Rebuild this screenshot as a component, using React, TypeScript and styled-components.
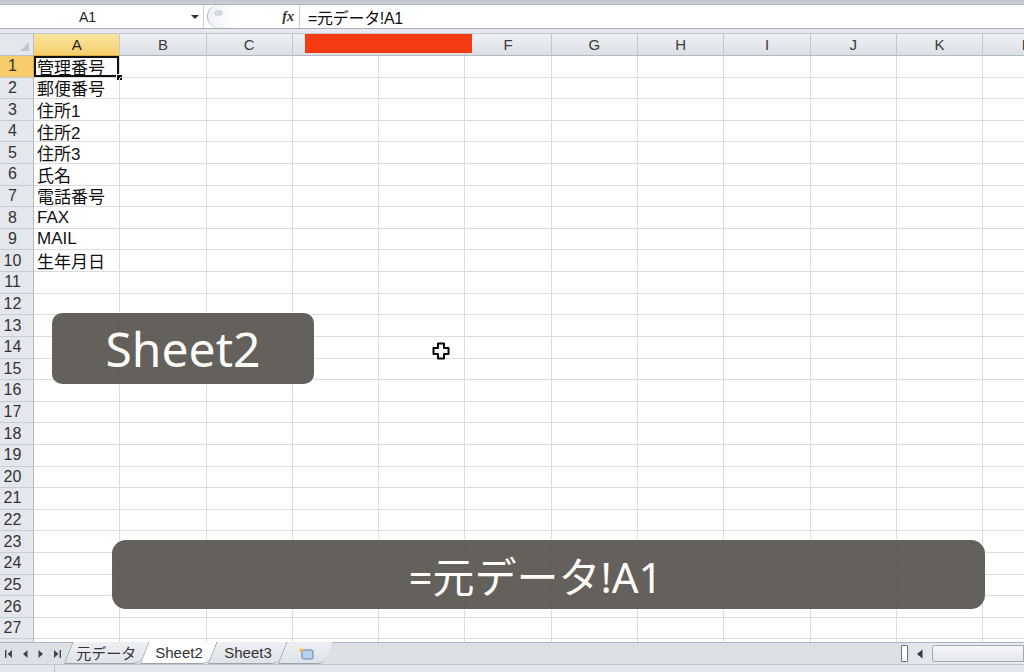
import React from 'react';
import styled, { createGlobalStyle } from 'styled-components';

const COLS = ['A', 'B', 'C', 'D', 'E', 'F', 'G', 'H', 'I', 'J', 'K', 'L'];
const ROWS = 28;
const DATA: Record<number, string> = {
  1: '管理番号',
  2: '郵便番号',
  3: '住所1',
  4: '住所2',
  5: '住所3',
  6: '氏名',
  7: '電話番号',
  8: 'FAX',
  9: 'MAIL',
  10: '生年月日',
};

const GlobalStyle = createGlobalStyle`
  html, body {
    margin: 0;
    padding: 0;
    background: #ffffff;
    overflow: hidden;
  }
  body {
    font-family: "Liberation Sans", "Noto Sans CJK JP", sans-serif;
  }
`;

function App() {
  return (
    <Page>
      <GlobalStyle />
      <TopStrip />
      <FormulaBar>
        <NameBox>
          <NameText>A1</NameText>
          <DropArrow />
        </NameBox>
        <FxBox>
          <Knob />
          <Fx>fx</Fx>
        </FxBox>
        <FormulaInput>=元データ!A1</FormulaInput>
      </FormulaBar>
      <Gap />
      <Sheet>
        <Corner>
          <CornerMark />
        </Corner>
        {COLS.map((c) => (
          <ColHeader key={c} selected={c === 'A'}>
            {c}
          </ColHeader>
        ))}
        {Array.from({ length: ROWS }, (_, i) => i + 1).map((r) => (
          <React.Fragment key={r}>
            <RowHeader selected={r === 1}>{r}</RowHeader>
            {COLS.map((c) => (
              <Cell key={c} active={r === 1 && c === 'A'}>
                {c === 'A' ? DATA[r] : ''}
              </Cell>
            ))}
          </React.Fragment>
        ))}
      </Sheet>
      <TabBar>
        <NavButtons>
          <NavIcon>
            <svg width="10" height="10" viewBox="0 0 10 10">
              <rect x="1" y="1" width="1.4" height="8" fill="#3d4450" />
              <path d="M8 1 L3.5 5 L8 9 Z" fill="#3d4450" />
            </svg>
          </NavIcon>
          <NavIcon>
            <svg width="10" height="10" viewBox="0 0 10 10">
              <path d="M7.5 1 L3 5 L7.5 9 Z" fill="#3d4450" />
            </svg>
          </NavIcon>
          <NavIcon>
            <svg width="10" height="10" viewBox="0 0 10 10">
              <path d="M2.5 1 L7 5 L2.5 9 Z" fill="#3d4450" />
            </svg>
          </NavIcon>
          <NavIcon>
            <svg width="10" height="10" viewBox="0 0 10 10">
              <path d="M2 1 L6.5 5 L2 9 Z" fill="#3d4450" />
              <rect x="7.6" y="1" width="1.4" height="8" fill="#3d4450" />
            </svg>
          </NavIcon>
        </NavButtons>
        <Tab width={76}>
          <TabLabel>元データ</TabLabel>
        </Tab>
        <Tab width={68} active>
          <TabLabel>Sheet2</TabLabel>
        </Tab>
        <Tab width={70}>
          <TabLabel>Sheet3</TabLabel>
        </Tab>
        <Tab width={46}>
          <TabLabel>
            <svg width="18" height="14" viewBox="0 0 18 14">
              <rect x="5" y="4" width="11" height="9" rx="1.5" fill="#b9d3ee" stroke="#5b7fa8" />
              <path d="M4 1 L5 3.5 L7.5 4 L5 4.8 L4 7.5 L3 4.8 L0.5 4 L3 3.5 Z" fill="#f3c21a" />
            </svg>
          </TabLabel>
        </Tab>
        <TabFill />
        <Splitter />
        <ScrollArrow>
          <svg width="8" height="10" viewBox="0 0 8 10">
            <path d="M6.5 0.5 L1 5 L6.5 9.5 Z" fill="#333b45" />
          </svg>
        </ScrollArrow>
        <ScrollTrack>
          <ScrollThumb />
        </ScrollTrack>
      </TabBar>
      <StatusStrip>
        <StatusCell />
      </StatusStrip>

      <Caption
        style={{ left: 52, top: 313, width: 262, height: 71 }}
        size={48}
        radius={10}
      >
        Sheet2
      </Caption>
      <Caption
        style={{ left: 112, top: 540, width: 873, height: 69, paddingRight: 26 }}
        size={42}
        radius={14}
      >
        =元データ!A1
      </Caption>
      <Pointer>
        <svg width="18" height="18" viewBox="0 0 18 18">
          <path
            d="M6 1.5 H12 V6 H16.5 V12 H12 V16.5 H6 V12 H1.5 V6 H6 Z"
            fill="#fff"
            stroke="#000"
            strokeWidth="2"
            strokeLinejoin="round"
          />
        </svg>
      </Pointer>
      <RedMark />
    </Page>
  );
}

export default App;

const Page = styled.div`
  position: relative;
  width: 1024px;
  height: 672px;
  display: flex;
  flex-direction: column;
  overflow: hidden;
  background: #fff;
`;

const TopStrip = styled.div`
  height: 4px;
  background: linear-gradient(#bfc4ca, #cfd3d8);
  border-bottom: 1px solid #a9aeb5;
`;

const FormulaBar = styled.div`
  height: 23px;
  display: flex;
  align-items: stretch;
  background: #fff;
  border-bottom: 1px solid #a9aeb5;
`;

const NameBox = styled.div`
  width: 203px;
  display: flex;
  align-items: center;
  border-right: 1px solid #c9cdd2;
`;

const NameText = styled.span`
  width: 175px;
  text-align: center;
  font-size: 14px;
  color: #222;
`;

const DropArrow = styled.span`
  margin-left: 16px;
  width: 0;
  height: 0;
  border-left: 4px solid transparent;
  border-right: 4px solid transparent;
  border-top: 4px solid #333;
`;

const FxBox = styled.div`
  width: 93px;
  display: flex;
  align-items: center;
  justify-content: space-between;
  margin-left: 3px;
  padding: 0 5px 0 6px;
  box-sizing: border-box;
  border-left: 1px solid #b5bac1;
  border-radius: 12px 0 0 12px;
  background: linear-gradient(90deg, #eef0f3 0%, #fff 30%);
  border-right: 1px solid #c9cdd2;
`;

const Knob = styled.span`
  width: 9px;
  height: 6px;
  border-radius: 50%;
  margin-top: -8px;
  background: #d4d8dd;
`;

const Fx = styled.span`
  font-family: "Liberation Serif", serif;
  font-style: italic;
  font-weight: bold;
  font-size: 14px;
  color: #333;
`;

const FormulaInput = styled.div`
  flex: 1;
  display: flex;
  align-items: center;
  padding-left: 8px;
  font-family: "Liberation Sans", "Noto Sans CJK JP", sans-serif;
  font-size: 16px;
  color: #111;
  letter-spacing: -0.3px;
`;

const Gap = styled.div`
  height: 4px;
  background: #e6e9ed;
`;

const Sheet = styled.div`
  flex: 1;
  display: grid;
  grid-template-columns: 34px repeat(12, 86.3px);
  grid-template-rows: 23px repeat(${ROWS}, 21.62px);
  overflow: hidden;
  background: #fff;
`;

const Corner = styled.div`
  position: relative;
  background: #e4e7eb;
  border-right: 1px solid #b9bec5;
  border-bottom: 1px solid #b9bec5;
  border-top: 1px solid #c4c8ce;
`;

const CornerMark = styled.span`
  position: absolute;
  right: 4px;
  bottom: 4px;
  width: 0;
  height: 0;
  border-left: 9px solid transparent;
  border-bottom: 9px solid #c3c8ce;
`;

const ColHeader = styled.div<{ selected?: boolean }>`
  display: flex;
  align-items: center;
  justify-content: center;
  font-size: 15px;
  color: ${(p) => (p.selected ? '#222' : '#3c3c3c')};
  background: ${(p) =>
    p.selected
      ? 'linear-gradient(#fbe4a0, #f6cf6c)'
      : 'linear-gradient(#eef0f3, #dce0e5)'};
  border-top: 1px solid #c4c8ce;
  border-right: 1px solid #c2c7cd;
  border-bottom: 1px solid ${(p) => (p.selected ? '#e1ac3f' : '#b4b9c0')};
`;

const RowHeader = styled.div<{ selected?: boolean }>`
  display: flex;
  align-items: center;
  justify-content: center;
  padding-right: 8px;
  font-size: 16px;
  color: #333;
  background: ${(p) => (p.selected ? '#f6cd6a' : '#e4e7ec')};
  border-right: 1px solid ${(p) => (p.selected ? '#e1ac3f' : '#b4b9c0')};
  border-bottom: 1px solid #c9cdd3;
`;

const Cell = styled.div<{ active?: boolean }>`
  position: relative;
  display: flex;
  align-items: center;
  padding-left: 3px;
  font-family: "Liberation Sans", "Noto Sans CJK JP", sans-serif;
  font-size: 17px;
  color: #111;
  white-space: nowrap;
  border-right: 1px solid #dadcde;
  border-bottom: 1px solid #dadcde;
  box-shadow: ${(p) => (p.active ? 'inset 0 0 0 2px #111' : 'none')};

  &::after {
    content: '';
    display: ${(p) => (p.active ? 'block' : 'none')};
    position: absolute;
    right: -4px;
    bottom: -4px;
    width: 5px;
    height: 5px;
    background: #111;
    border: 1px solid #fff;
  }
`;

const TabBar = styled.div`
  height: 21px;
  display: flex;
  align-items: stretch;
  background: #dde1e6;
  border-top: 1px solid #b0b5bc;
`;

const NavButtons = styled.div`
  width: 68px;
  display: flex;
  align-items: center;
  padding-left: 1px;
  box-sizing: border-box;
`;

const NavIcon = styled.span`
  width: 16px;
  display: flex;
  justify-content: center;
`;

const Tab = styled.div<{ width: number; active?: boolean }>`
  width: ${(p) => p.width}px;
  display: flex;
  align-items: center;
  justify-content: center;
  margin-top: -1px;
  background: ${(p) => (p.active ? '#ffffff' : 'linear-gradient(#eef0f3, #dfe3e8)')};
  border-left: 1px solid #9da3ab;
  border-bottom: 1px solid #9da3ab;
  border-radius: 0 0 6px 2px;
  box-sizing: border-box;
  transform: skewX(-22deg);
`;

const TabLabel = styled.span`
  display: flex;
  align-items: center;
  transform: skewX(22deg);
  font-family: "Liberation Sans", "Noto Sans CJK JP", sans-serif;
  font-size: 15px;
  color: #333;
`;

const TabFill = styled.div`
  flex: 1;
  margin-left: 4px;
`;

const Splitter = styled.div`
  width: 5px;
  margin: 2px 2px;
  background: #fff;
  border: 1px solid #6b7079;
  border-radius: 1px;
`;

const ScrollArrow = styled.div`
  width: 20px;
  display: flex;
  align-items: center;
  justify-content: center;
  background: #e3e6ea;
`;

const ScrollTrack = styled.div`
  width: 94px;
  display: flex;
  padding: 2px 0 2px 2px;
  box-sizing: border-box;
  background: #e8ebee;
`;

const ScrollThumb = styled.div`
  flex: 1;
  background: linear-gradient(#f6f7f9, #e4e7eb);
  border: 1px solid #a3a9b1;
  border-radius: 2px 0 0 2px;
`;

const StatusStrip = styled.div`
  flex: 0 0 7px;
  background: #e3e6ea;
  border-top: 1px solid #c3c8ce;
  display: flex;
`;

const StatusCell = styled.div`
  width: 54px;
  border-right: 1px solid #b9bec5;
`;

const Caption = styled.div<{ size: number; radius: number }>`
  position: absolute;
  box-sizing: border-box;
  display: flex;
  align-items: center;
  justify-content: center;
  background: rgba(88, 84, 80, 0.93);
  border-radius: ${(p) => p.radius}px;
  color: #fdfbf7;
  font-family: "Noto Sans", "Noto Sans CJK JP", sans-serif;
  font-size: ${(p) => p.size}px;
  box-shadow: 0 0 0 1px rgba(255, 255, 255, 0.5);
`;

const Pointer = styled.div`
  position: absolute;
  left: 432px;
  top: 342px;
  width: 18px;
  height: 18px;
`;

const RedMark = styled.div`
  position: absolute;
  left: 305px;
  top: 34px;
  width: 167px;
  height: 19px;
  background: #f43b12;
`;
